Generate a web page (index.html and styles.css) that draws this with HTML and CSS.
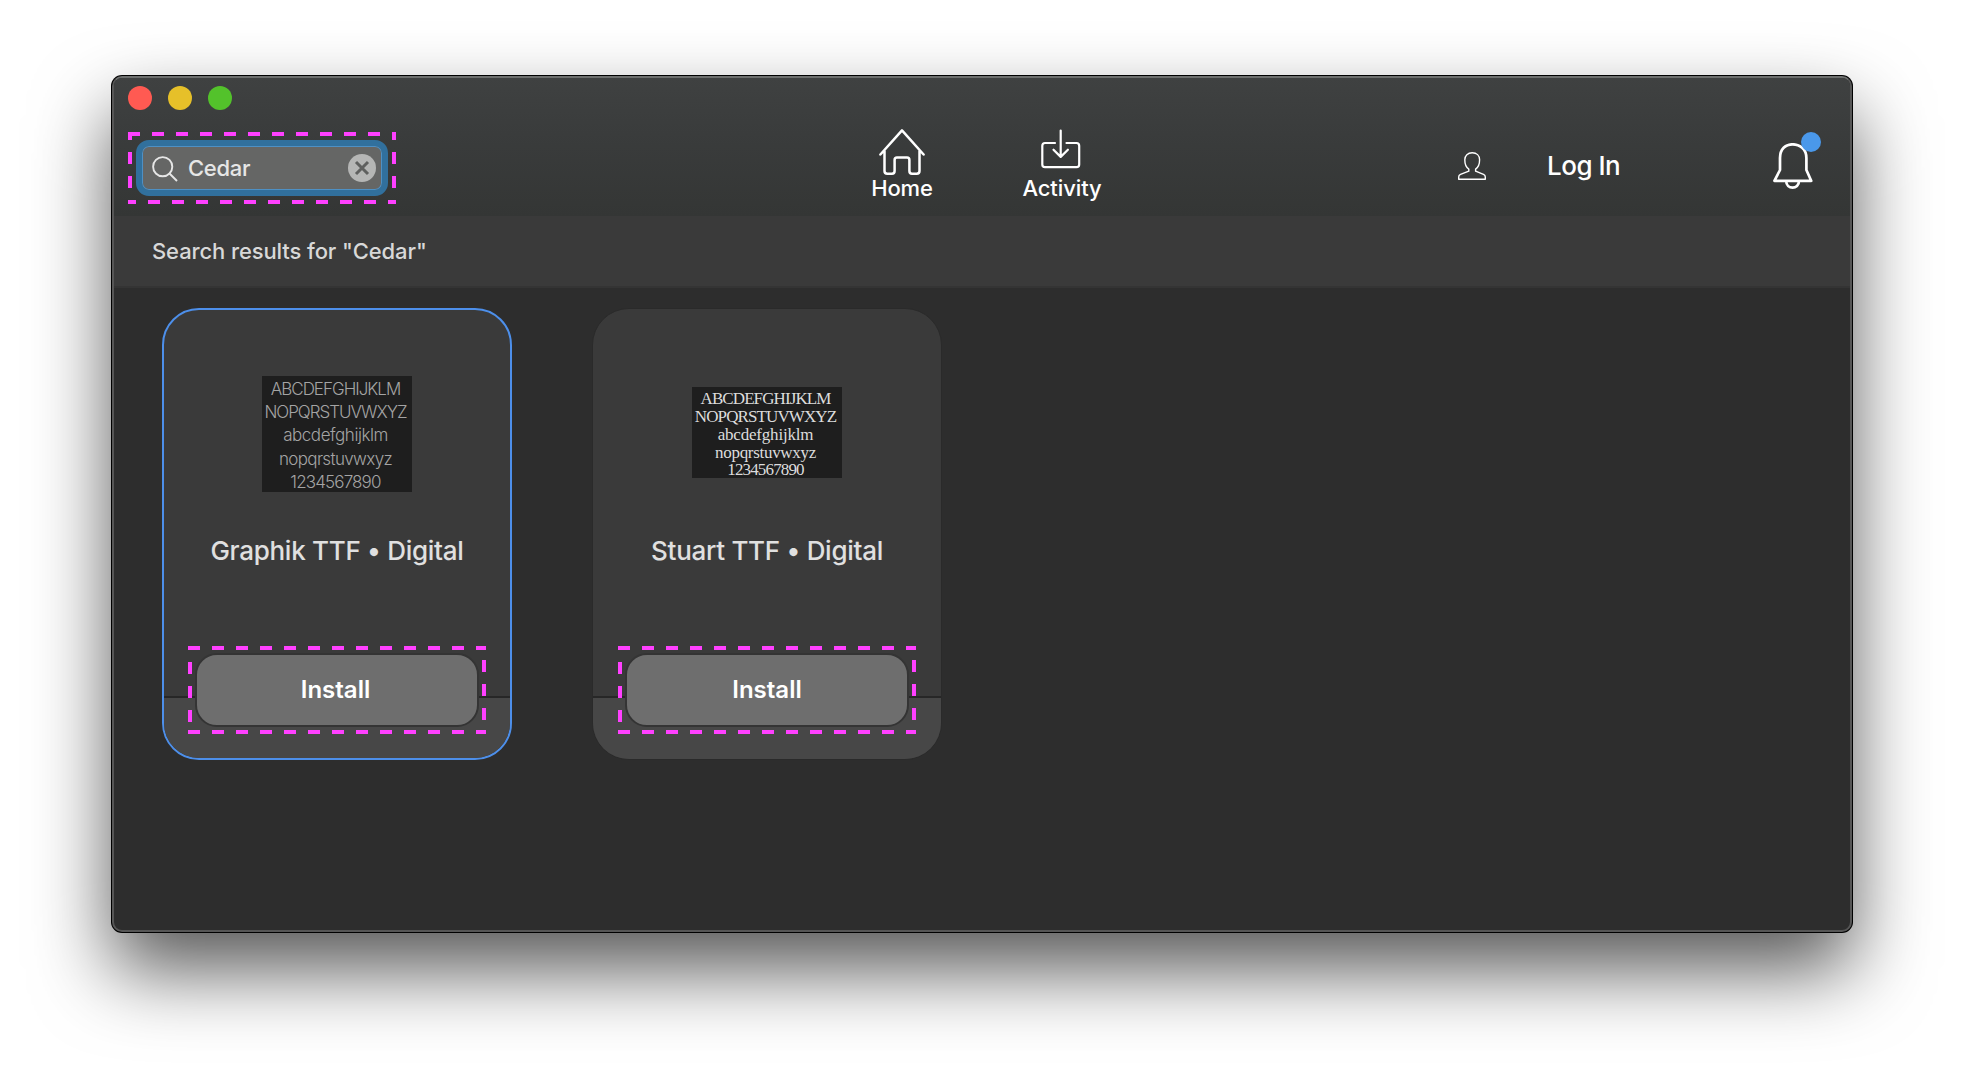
FILE: index.html
```html
<!DOCTYPE html>
<html lang="en">
<head>
<meta charset="utf-8">
<title>Search results</title>
<link rel="stylesheet" href="styles.css">
</head>
<body>
<main class="window">
  <header class="toolbar">
    <div class="lights"><i class="light red"></i><i class="light yellow"></i><i class="light green"></i></div>
    <div class="tools">
      <div class="search-mark">
        <label class="search">
          <svg class="glass" width="26" height="26" viewBox="0 0 26 26"><circle cx="10.7" cy="10.7" r="9.6"/><path d="M17.5 17.5 25 25"/></svg>
          <span class="query">Cedar</span>
          <svg class="clear" width="28" height="28" viewBox="0 0 28 28"><circle cx="14" cy="14" r="14"/><path d="M8 8 20 20M20 8 8 20"/></svg>
        </label>
        <svg class="marks" width="268" height="72" viewBox="0 0 268 72"><path stroke-dasharray="12 12" d="M0 2H268M2 20V60M266 20V60"/><path d="M2 0V8M266 0V8M0 70H8M260 70H268"/><path stroke-dasharray="12 12" d="M20 70H250"/></svg>
      </div>
      <nav class="nav">
        <a class="nav-item"><svg width="48" height="48" viewBox="0 0 48 48"><path d="M2.4 25.500 24 1.400 45.600 25.500M6.500 22V42Q6.500 44.700 9.300 44.700H14Q16.600 44.700 16.600 42V31Q16.600 28.500 19 28.500H29Q31.400 28.500 31.400 31V42Q31.400 44.700 34 44.700H38.700Q41.500 44.700 41.500 42V22"/></svg><span>Home</span></a>
        <a class="nav-item activity"><svg width="48" height="48" viewBox="0 0 48 48"><path d="M18 14H8Q5.300 14 5.300 16.700V35.500Q5.300 38.200 8 38.200H39.500Q42.200 38.200 42.200 35.500V16.700Q42.200 14 39.500 14H29.500M23.700 1.500V27.500M16.500 20.700 23.700 27.900 30.900 20.700"/></svg><span>Activity</span></a>
      </nav>
      <svg class="person" width="28" height="28" viewBox="0 0 28 28"><path d="M10.800 17.200C8.200 15.500 6.800 11.500 6.800 7.800 6.800 3.500 9.800.8 14.200.8S21.600 3.500 21.600 7.800C21.600 11.500 20.200 15.500 17.600 17.200V19.200L25.500 22.400Q27.300 23.200 27.300 25V27.200H.7V25Q.7 23.200 2.500 22.400L10.800 19.200Z"/></svg>
      <a class="login">Log In</a>
      <div class="bell">
        <svg width="40" height="48" viewBox="0 0 40 48"><path d="M1.400 37.800 7 27V15C7 6 12.500 1.300 19.600 1.300S33.400 6 33.400 15V27L38.200 37.800ZM13.200 38C13.200 46.900 26 46.900 26 38"/></svg>
        <i class="dot"></i>
      </div>
    </div>
  </header>
  <h1 class="results">Search results for "Cedar"</h1>
  <section class="cards">
    <article class="card selected">
      <div class="body">
        <div class="specimen sans"><span class="upper">ABCDEFGHIJKLM</span><span class="upper">NOPQRSTUVWXYZ</span><span class="lower">abcdefghijklm</span><span class="lower late">nopqrstuvwxyz</span><span class="digits">1234567890</span></div>
        <h2 class="name">Graphik TTF • Digital</h2>
      </div>
      <div class="foot"></div>
      <div class="action">
        <button class="install">Install</button>
        <svg class="marks" width="298" height="88" viewBox="0 0 298 88"><path stroke-dasharray="12 12" d="M0 2H298M0 86H298M2 16V76M296 14V74"/></svg>
      </div>
    </article>
    <article class="card">
      <div class="body">
        <div class="specimen serif"><span class="upper">ABCDEFGHIJKLM</span><span class="upper">NOPQRSTUVWXYZ</span><span class="lower">abcdefghijklm</span><span class="lower late">nopqrstuvwxyz</span><span class="digits">1234567890</span></div>
        <h2 class="name">Stuart TTF • Digital</h2>
      </div>
      <div class="foot"></div>
      <div class="action">
        <button class="install">Install</button>
        <svg class="marks" width="298" height="88" viewBox="0 0 298 88"><path stroke-dasharray="12 12" d="M0 2H298M0 86H298M2 16V76M296 14V74"/></svg>
      </div>
    </article>
  </section>
</main>
</body>
</html>
```
FILE: styles.css
```css
* { box-sizing: border-box; }
body {
  margin: 0;
  padding: 76px 112px;
  height: 1080px;
  overflow: hidden;
  background: #fff;
  font-family: Inter, "Liberation Sans", sans-serif;
}
.window {
  height: 856px;
  border: 2px solid #565656;
  border-top-color: #6d6f6e;
  border-radius: 10px;
  background: #2d2d2d;
  box-shadow: 0 0 0 1px #000, 0 38px 78px rgba(0, 0, 0, .66);
}
svg { display: block; fill: none; stroke: #fff; }
.toolbar {
  height: 138px;
  padding: 8px 0 0 14px;
  border-radius: 8px 8px 0 0;
  background: linear-gradient(#3f4141, #3a3c3c 40%, #343635);
}
.lights { display: flex; gap: 16px; height: 24px; }
.light { width: 24px; border-radius: 50%; }
.red { background: #ff5a52; }
.yellow { background: #e6c029; }
.green { background: #53c22b; }
.tools { display: flex; margin-top: 19px; height: 87px; }
.search-mark { position: relative; width: 268px; height: 72px; margin-top: 3px; padding: 8px; }
.marks { position: absolute; left: 0; top: 0; stroke: #ff40ff; stroke-width: 4; }
.search {
  display: flex;
  align-items: center;
  width: 252px;
  height: 56px;
  padding: 0 6px 0 10px;
  border: 6px solid #31709d;
  border-radius: 13px;
  background: #656665;
  box-shadow: inset 0 0 0 1px #4e90c4;
}
.glass { stroke: #e6e6e6; stroke-width: 1.900; margin-top: 2px; }
.query { margin-left: 10px; font-size: 22px; font-weight: 500; letter-spacing: -.3px; color: #e6e6e6; }
.clear { margin-left: auto; stroke: #5f605f; stroke-width: 3; }
.clear circle { fill: #b5b6b5; stroke: none; }
.nav { display: flex; gap: 40px; margin-left: 446px; }
.nav-item {
  display: flex;
  flex-direction: column;
  align-items: center;
  width: 120px;
  color: #fff;
  font-size: 22px;
  font-weight: 500;
  line-height: 26px;
  letter-spacing: -.1px;
}
.nav-item svg { stroke-width: 2.500; stroke-linecap: round; stroke-linejoin: round; margin-bottom: -2px; }
.activity svg { stroke-width: 2.200; margin-right: 3px; }
.person { margin: 23px 0 0 336px; stroke-width: 1.400; stroke-linejoin: round; }
.login { margin: 21px 0 0 61px; color: #fff; font-size: 26px; font-weight: 500; line-height: 32px; letter-spacing: -.5px; }
.bell { position: relative; width: 40px; margin: 14px 37px 0 auto; }
.bell svg { stroke-width: 2.700; stroke-linejoin: round; }
.dot { position: absolute; left: 28px; top: -11px; width: 20px; height: 20px; border-radius: 50%; background: #4a98ea; }
.results {
  margin: 0;
  height: 72px;
  padding: 18px 38px;
  border-bottom: 2px solid #343434;
  background: #3a3a3a;
  color: #d8d8d8;
  font-size: 22px;
  font-weight: 500;
  line-height: 34px;
  letter-spacing: -.11px;
}
.cards { display: flex; gap: 80px; padding: 20px 48px; }
.card {
  position: relative;
  width: 350px;
  height: 452px;
  border: 1px solid #2a2a2a;
  border-radius: 37px;
  background: #3a3a3a;
  overflow: hidden;
}
.selected { border: 2px solid #4d8fea; }
.body { display: flex; flex-direction: column; align-items: center; height: 388px; border-bottom: 2px solid #272727; }
.card:not(.selected) .body { height: 389px; padding-top: 1px; }
.foot { height: 62px; background: #474747; }
.specimen {
  display: flex;
  flex-direction: column;
  align-items: center;
  width: 150px;
  padding-right: 3px;
  background: #1e1e1e;
  white-space: nowrap;
}
.sans { margin-top: 66px; height: 116px; padding-top: 1.500px; color: #a4a4a4; font-size: 17px; font-weight: 300; line-height: 23.400px; }
.sans .upper { letter-spacing: -1px; }
.sans .lower { letter-spacing: -.45px; }
.sans .late { letter-spacing: -.65px; }
.sans .digits { letter-spacing: -.85px; }
.serif { margin-top: 77px; height: 91px; padding-top: 3px; color: #dcdcdc; font: 17px/17.850px "Liberation Serif", serif; }
.serif .upper { letter-spacing: -.9px; }
.serif .lower { letter-spacing: -.2px; }
.serif .late { letter-spacing: -.3px; }
.serif .digits { letter-spacing: -.85px; }
.name { position: absolute; top: 225px; margin: 0; color: #e0e0e0; font-size: 26px; font-weight: 500; line-height: 34px; letter-spacing: -.29px; }
.selected .name { top: 224px; }
.action { position: absolute; left: 24px; top: 336px; width: 298px; height: 88px; padding: 7px; }
.card:not(.selected) .action { left: 25px; top: 337px; }
.install {
  width: 284px;
  height: 74px;
  padding: 0 0 2px;
  border: 2px solid #343434;
  border-radius: 22px;
  background: #6e6e6e;
  color: #fff;
  font: 600 24px Inter, sans-serif;
}
.selected .install { padding-right: 3px; }
```
